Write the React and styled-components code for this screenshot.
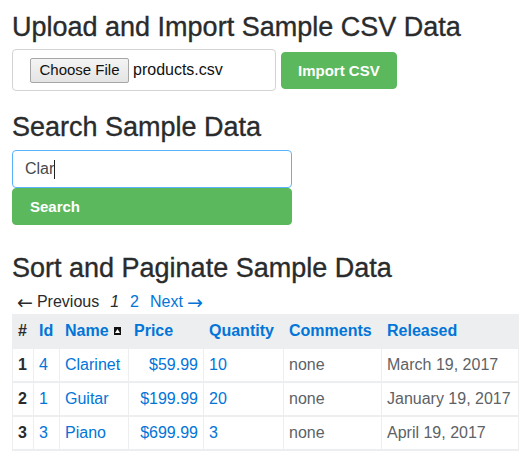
import React from "react";
import styled, { createGlobalStyle } from "styled-components";

const GlobalStyle = createGlobalStyle`
  *, *::before, *::after { box-sizing: border-box; }
  html, body { margin: 0; padding: 0; background: #fff; }
  body {
    font-family: "Liberation Sans", Arial, Helvetica, sans-serif;
    font-size: 16px;
    line-height: 24px;
    color: #292b2c;
  }
`;

const Page = styled.div`
  padding: 12px 13px 0 12px;
  width: 531px;
`;

const Heading = styled.h3`
  margin: 0 0 ${(p) => p.$mb}px 0;
  margin-top: ${(p) => p.$mt}px;
  font-size: 27px;
  line-height: 30px;
  font-weight: 400;
  color: #292b2c;
  -webkit-text-stroke: 0.35px #292b2c;
`;

const UploadRow = styled.div`
  display: flex;
  align-items: center;
  gap: 5px;
`;

const FileBox = styled.label`
  display: flex;
  align-items: center;
  gap: 4px;
  width: 264px;
  height: 42px;
  padding-left: 17px;
  border: 1px solid #d3d3d3;
  border-radius: 4px;
  font-size: 16px;
  color: #111;
`;

const ChooseButton = styled.span`
  display: inline-flex;
  align-items: center;
  justify-content: center;
  width: 99px;
  height: 25px;
  background: linear-gradient(#f4f4f4, #e4e4e4);
  border: 1px solid #a6a6a6;
  border-radius: 2px;
  font-size: 15px;
  color: #111;
`;

const GreenButton = styled.button`
  display: flex;
  align-items: center;
  justify-content: ${(p) => (p.$block ? "flex-start" : "center")};
  width: ${(p) => (p.$block ? "280px" : "auto")};
  height: 37px;
  padding: 0 ${(p) => (p.$block ? "17px" : "16px")};
  background: #5cb85c;
  border: 1px solid #5cb85c;
  border-radius: 4px;
  color: #fff;
  font-family: inherit;
  font-size: 15px;
  font-weight: 700;
  cursor: pointer;
`;

const SearchStack = styled.div`
  display: flex;
  flex-direction: column;
  width: 280px;
`;

const SearchInput = styled.div`
  display: flex;
  align-items: center;
  height: 38px;
  padding-left: 12px;
  border: 1px solid #5cb3fd;
  border-radius: 4px;
  font-size: 16px;
  color: #464a4c;
`;

const Caret = styled.span`
  display: inline-block;
  width: 1px;
  height: 19px;
  background: #222;
`;

const Pager = styled.div`
  display: flex;
  align-items: center;
  gap: 11px;
  height: 24px;
  margin-top: 7px;
  padding-left: 5px;
  font-size: 16px;
`;

const PageItem = styled.span`
  display: inline-flex;
  align-items: center;
  gap: 4px;
  color: ${(p) => (p.$link ? "#0275d8" : "#292b2c")};
  font-style: ${(p) => (p.$current ? "italic" : "normal")};
`;

const Arrow = styled.span`
  font-family: "DejaVu Sans", sans-serif;
  font-size: 19px;
  line-height: 24px;
`;

const Table = styled.table`
  width: 506px;
  table-layout: fixed;
  border-collapse: collapse;
`;

const Th = styled.th`
  padding: 5px 5px 4px;
  text-align: left;
  font-weight: 700;
  line-height: 24px;
  white-space: nowrap;
  color: ${(p) => (p.$plain ? "#292b2c" : "#0275d8")};
  background: #eceeef;
  border-left: 1px solid #eceeef;
  border-right: 1px solid #eceeef;
  border-bottom: 2px solid #eceeef;
`;

const Td = styled.td`
  padding: 4px 5px;
  line-height: 24px;
  white-space: nowrap;
  text-align: ${(p) => (p.$right ? "right" : "left")};
  font-weight: ${(p) => (p.$bold ? 700 : 400)};
  color: ${(p) =>
    p.$tone === "link" ? "#0275d8" : p.$tone === "muted" ? "#5d6266" : "#292b2c"};
  border: 1px solid #eceeef;
  border-bottom-width: 2px;
  border-top-width: 0;
`;

const SortIcon = () => (
  <svg width="7" height="8" viewBox="0 0 7 8" style={{ marginLeft: 5, verticalAlign: "1px" }}>
    <rect x="0" y="0" width="7" height="8" fill="#111" />
    <polygon points="3.5,2 6,6 1,6" fill="#fff" />
  </svg>
);

const rows = [
  { n: 1, id: 4, name: "Clarinet", price: "$59.99", qty: 10, comments: "none", released: "March 19, 2017" },
  { n: 2, id: 1, name: "Guitar", price: "$199.99", qty: 20, comments: "none", released: "January 19, 2017" },
  { n: 3, id: 3, name: "Piano", price: "$699.99", qty: 3, comments: "none", released: "April 19, 2017" },
];

const colWidths = [21, 26, 69, 75, 80, 98, 137];

export default function App() {
  return (
    <>
      <GlobalStyle />
      <Page>
        <Heading $mt={0} $mb={7}>Upload and Import Sample CSV Data</Heading>
        <UploadRow>
          <FileBox>
            <ChooseButton>Choose File</ChooseButton>
            <span>products.csv</span>
          </FileBox>
          <GreenButton>Import CSV</GreenButton>
        </UploadRow>

        <Heading $mt={21} $mb={8}>Search Sample Data</Heading>
        <SearchStack>
          <SearchInput>
            Clar<Caret />
          </SearchInput>
          <GreenButton $block>Search</GreenButton>
        </SearchStack>

        <Heading $mt={28} $mb={0}>Sort and Paginate Sample Data</Heading>
        <Pager>
          <PageItem>
            <Arrow>←</Arrow>Previous
          </PageItem>
          <PageItem $current>1</PageItem>
          <PageItem $link>2</PageItem>
          <PageItem $link>
            Next<Arrow>→</Arrow>
          </PageItem>
        </Pager>
        <Table>
          <colgroup>
            {colWidths.map((w, i) => (
              <col key={i} style={{ width: w }} />
            ))}
          </colgroup>
          <thead>
            <tr>
              <Th $plain>#</Th>
              <Th>Id</Th>
              <Th>
                Name
                <SortIcon />
              </Th>
              <Th>Price</Th>
              <Th>Quantity</Th>
              <Th>Comments</Th>
              <Th>Released</Th>
            </tr>
          </thead>
          <tbody>
            {rows.map((r) => (
              <tr key={r.n}>
                <Td $bold>{r.n}</Td>
                <Td $tone="link">{r.id}</Td>
                <Td $tone="link">{r.name}</Td>
                <Td $tone="link" $right>{r.price}</Td>
                <Td $tone="link">{r.qty}</Td>
                <Td $tone="muted">{r.comments}</Td>
                <Td $tone="muted">{r.released}</Td>
              </tr>
            ))}
          </tbody>
        </Table>
      </Page>
    </>
  );
}
